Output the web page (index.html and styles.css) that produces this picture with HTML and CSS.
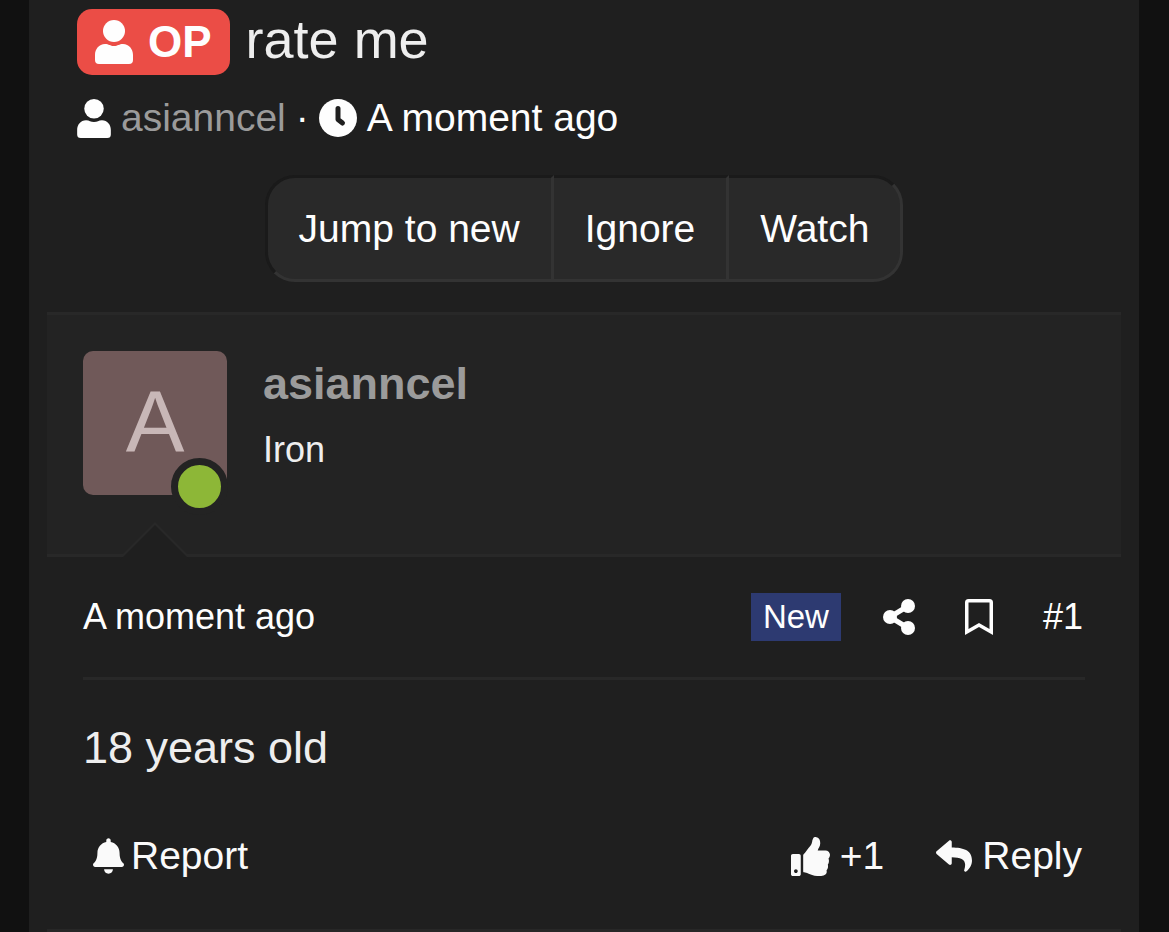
FILE: index.html
```
<!DOCTYPE html>
<html lang="en">
<head>
  <meta charset="UTF-8">
  <meta name="viewport" content="width=device-width, initial-scale=1.0">
  <title>rate me</title>
  <link rel="stylesheet" href="styles.css">
</head>
<body>
  <svg class="sprite" aria-hidden="true">
    <symbol id="icon-user" viewBox="0 0 38 44">
      <circle cx="19" cy="11" r="11"/>
      <path d="M10 24C14 24 15 26 19 26S24 24 28 24C34 24 38 29 38 35V40Q38 44 34 44H4Q0 44 0 40V35C0 29 4 24 10 24Z"/>
    </symbol>
  </svg>

  <main class="page">
    <header class="thread-header">
      <h1 class="thread-title">
        <span class="label-op">
          <svg width="38" height="44"><use href="#icon-user"/></svg>
          OP
        </span>
        rate me
      </h1>
      <div class="thread-info">
        <svg width="34" height="39"><use href="#icon-user"/></svg>
        <a href="#" class="username">asianncel</a>
        <span class="dot">·</span>
        <svg width="38" height="38" viewBox="0 0 38 38">
          <circle cx="19" cy="19" r="19"/>
          <path class="clock-hand" d="M19 9.500V20.500L23.500 24"/>
        </svg>
        <time>A moment ago</time>
      </div>
      <div class="button-group">
        <button type="button">Jump to new</button>
        <button type="button">Ignore</button>
        <button type="button">Watch</button>
      </div>
    </header>

    <article class="message">
      <section class="message-user">
        <a href="#" class="avatar">A<span class="online"></span></a>
        <div class="user-details">
          <h2><a href="#" class="username">asianncel</a></h2>
          <p>Iron</p>
        </div>
      </section>

      <div class="message-main">
        <div class="message-meta">
          <time>A moment ago</time>
          <span class="label-new">New</span>
          <div class="meta-links">
            <a href="#" aria-label="Share">
              <svg width="32" height="36" viewBox="0 0 32 36">
                <path class="share-line" d="M25 7L7 18L25 29"/>
                <circle cx="25" cy="7" r="7"/>
                <circle cx="7" cy="18" r="7"/>
                <circle cx="25" cy="29" r="7"/>
              </svg>
            </a>
            <a href="#" aria-label="Bookmark">
              <svg width="28" height="36" viewBox="0 0 28 36">
                <path fill-rule="evenodd" d="M3.500 0H24.500Q28 0 28 3.500V36L14 28L0 36V3.500Q0 0 3.500 0ZM3.500 3.500V30L14 24L24.500 30V3.500Z"/>
              </svg>
            </a>
            <a href="#">#1</a>
          </div>
        </div>

        <div class="message-body">18 years old</div>

        <footer class="message-actions">
          <a href="#" class="report">
            <svg width="31" height="36" viewBox="0 0 448 512">
              <path d="M224 512c35.320 0 63.970-28.650 63.970-64H160.030c0 35.350 28.650 64 63.970 64zm215.390-149.710c-19.320-20.760-55.470-51.990-55.470-154.290 0-77.700-54.480-139.900-127.940-155.160V32c0-17.670-14.320-32-31.980-32s-31.980 14.330-31.980 32v20.840C118.560 68.100 64.080 130.300 64.080 208c0 102.300-36.150 133.530-55.470 154.290-6 6.450-8.660 14.160-8.610 21.710.110 16.400 12.980 32 32.100 32h383.800c19.120 0 32-15.600 32.100-32 .050-7.550-2.610-15.270-8.610-21.710z"/>
            </svg>
            Report
          </a>
          <a href="#">
            <svg width="39" height="39" viewBox="0 0 512 512">
              <path d="M104 224H24c-13.255 0-24 10.745-24 24v240c0 13.255 10.745 24 24 24h80c13.255 0 24-10.745 24-24V248c0-13.255-10.745-24-24-24zM64 472c-13.255 0-24-10.745-24-24s10.745-24 24-24 24 10.745 24 24-10.745 24-24 24zM384 81.452c0 42.416-25.970 66.208-33.277 94.548h101.723c33.397 0 59.397 27.746 59.553 58.098.084 17.938-7.546 37.249-19.439 49.197l-.110.110c9.836 23.337 8.237 56.037-9.308 79.469 8.681 25.895-.069 57.704-16.382 74.757 4.298 17.598 2.244 32.575-6.148 44.632C440.202 511.587 389.616 512 346.839 512l-2.845-.001c-48.287-.017-87.806-17.598-119.560-31.725-15.957-7.099-36.821-15.887-52.651-16.178-6.540-.120-11.783-5.457-11.783-11.998v-213.770c0-3.200 1.282-6.271 3.558-8.521 39.614-39.144 56.648-80.587 89.117-113.111 14.804-14.832 20.188-37.236 25.393-58.902C282.515 39.293 291.817 0 312 0c24 0 72 8 72 81.452z"/>
            </svg>
            +1
          </a>
          <a href="#">
            <svg width="36" height="36" viewBox="0 0 512 512">
              <path d="M8.309 189.836L184.313 37.851C199.719 24.546 224 35.347 224 56.015v80.053c160.629 1.839 288 34.032 288 186.258 0 61.441-39.581 122.309-83.333 154.132-13.653 9.931-33.111-2.533-28.077-18.631 45.344-145.012-21.507-183.510-176.590-185.742V360c0 20.700-24.300 31.453-39.687 18.164l-176.004-152c-11.071-9.562-11.086-26.753 0-36.328z"/>
            </svg>
            Reply
          </a>
        </footer>
      </div>
    </article>
  </main>
</body>
</html>
```
FILE: styles.css
```
* {
  box-sizing: border-box;
}
body {
  margin: 0;
  padding: 0 30px 0 29px;
  background-color: #111111;
  color: #fefefe;
  font-family: 'Liberation Sans', Arial, sans-serif;
  font-size: 39px;
  line-height: 46px;
}
h1, h2, p {
  margin: 0;
  font-weight: normal;
}
a {
  color: inherit;
  text-decoration: none;
}
svg {
  display: block;
  flex-shrink: 0;
  fill: currentColor;
}
.sprite {
  display: none;
}
.page {
  min-height: 100vh;
  background-color: #1f1f1f;
}
.username {
  color: #9b9b9b;
}

/* Thread header */
.thread-header {
  padding: 9px 48px 30px;
}
.thread-title {
  display: flex;
  align-items: flex-start;
  gap: 16px;
  color: #eeeeee;
  font-size: 54px;
  line-height: 60px;
}
.label-op {
  display: flex;
  align-items: center;
  gap: 15px;
  height: 66px;
  padding: 0 18px;
  border-radius: 15px;
  background-color: #eb4d46;
  color: #fefefe;
  font-size: 44px;
  font-weight: bold;
}
.thread-info {
  display: flex;
  align-items: center;
  gap: 10px;
  margin-top: 20px;
}
.clock-hand {
  fill: none;
  stroke: #1f1f1f;
  stroke-width: 5;
  stroke-linecap: round;
  stroke-linejoin: round;
}
.button-group {
  display: flex;
  justify-content: center;
  margin-top: 34px;
}
.button-group button {
  padding: 28px 31px 27px;
  border: 3px solid;
  border-color: #1a1a1a #333333 #333333 #1a1a1a;
  border-left-width: 0;
  background-color: #292929;
  color: inherit;
  font: inherit;
  cursor: pointer;
}
.button-group button:first-child {
  border-left-width: 3px;
  border-radius: 30px 0 0 30px;
}
.button-group button:last-child {
  border-radius: 0 30px 30px 0;
}

/* Message */
.message {
  margin: 0 18px;
  border-bottom: 3px solid #272727;
}
.message-user {
  position: relative;
  display: flex;
  gap: 36px;
  padding: 36px 36px 59px;
  border-top: 3px solid #282828;
  border-bottom: 3px solid #282828;
  background-color: #232323;
}
/* arrow pointing at the avatar */
.message-user::before,
.message-user::after {
  content: '';
  position: absolute;
  left: 73px;
  bottom: -3px;
  border: 35px solid transparent;
  border-top-width: 0;
  border-bottom-color: #282828;
}
.message-user::after {
  bottom: -6px;
  border-bottom-color: #1f1f1f;
}
.avatar {
  position: relative;
  width: 144px;
  height: 144px;
  border-radius: 10px;
  background-color: #705959;
  color: #c8b7b7;
  font-size: 88px;
  line-height: 142px;
  text-align: center;
}
.online {
  position: absolute;
  right: -1px;
  bottom: -20px;
  width: 57px;
  height: 57px;
  border: 7px solid #232323;
  border-radius: 50%;
  background-color: #8db737;
}
.user-details {
  padding-top: 4px;
}
.user-details h2 {
  font-size: 45px;
  font-weight: bold;
  line-height: 58px;
}
.user-details p {
  margin-top: 14px;
  color: #eeeeee;
  font-size: 36px;
}
.message-main {
  padding: 36px 36px 50px;
}
.message-meta {
  display: flex;
  align-items: center;
  gap: 42px;
  padding: 0 2px 36px 0;
  border-bottom: 3px solid #282828;
  font-size: 36px;
}
.message-meta time {
  margin-right: auto;
}
.label-new {
  padding: 1px 12px;
  background-color: #2d3a71;
  font-size: 33px;
}
.meta-links {
  display: flex;
  align-items: center;
  gap: 50px;
}
.share-line {
  fill: none;
  stroke: currentColor;
  stroke-width: 5;
}
.message-body {
  margin-top: 36px;
  color: #eeeeee;
  font-size: 45px;
  line-height: 63px;
}
.message-actions {
  display: flex;
  gap: 52px;
  margin-top: 54px;
  padding: 0 3px 0 10px;
  color: #fafafa;
}
.message-actions a {
  display: flex;
  align-items: center;
  gap: 10px;
}
.message-actions .report {
  gap: 7px;
  margin-right: auto;
}
```
